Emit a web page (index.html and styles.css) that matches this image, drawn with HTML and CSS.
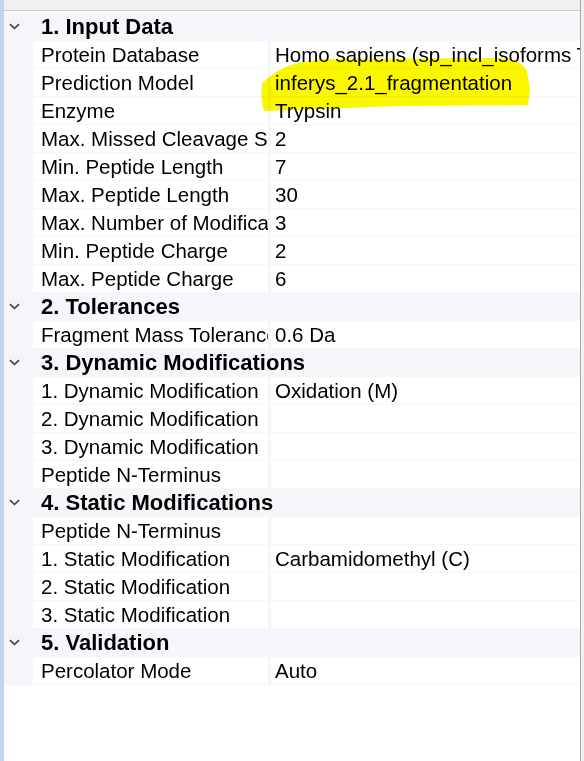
FILE: index.html
```html
<!DOCTYPE html>
<html lang="en">
<head>
    <meta charset="UTF-8">
    <title>Parameters</title>
    <link rel="stylesheet" href="styles.css">
</head>
<body>
    <div class="window">
        <div class="side"></div>
        <div class="panel">
            <div class="topbar"></div>
            <div class="grid">
                <div class="group"><span class="chev"><svg width="11" height="7" viewBox="0 0 11 7"><path d="M1 1.2 L5.5 5.5 L10 1.2" fill="none" stroke="#3c3c3c" stroke-width="1.6"/></svg></span><span class="title">1. Input Data</span></div>
                <div class="row"><span class="indent"></span><span class="name">Protein Database</span><span class="value">Homo sapiens (sp_incl_isoforms TaxID=9606)</span></div>
                <div class="row"><span class="indent"></span><span class="name">Prediction Model</span><span class="value">inferys_2.1_fragmentation</span></div>
                <div class="row"><span class="indent"></span><span class="name">Enzyme</span><span class="value">Trypsin</span></div>
                <div class="row"><span class="indent"></span><span class="name">Max. Missed Cleavage Sites</span><span class="value">2</span></div>
                <div class="row"><span class="indent"></span><span class="name">Min. Peptide Length</span><span class="value">7</span></div>
                <div class="row"><span class="indent"></span><span class="name">Max. Peptide Length</span><span class="value">30</span></div>
                <div class="row"><span class="indent"></span><span class="name">Max. Number of Modifications Per Peptide</span><span class="value">3</span></div>
                <div class="row"><span class="indent"></span><span class="name">Min. Peptide Charge</span><span class="value">2</span></div>
                <div class="row"><span class="indent"></span><span class="name">Max. Peptide Charge</span><span class="value">6</span></div>

                <div class="group"><span class="chev"><svg width="11" height="7" viewBox="0 0 11 7"><path d="M1 1.2 L5.5 5.5 L10 1.2" fill="none" stroke="#3c3c3c" stroke-width="1.6"/></svg></span><span class="title">2. Tolerances</span></div>
                <div class="row"><span class="indent"></span><span class="name">Fragment Mass Tolerance</span><span class="value">0.6 Da</span></div>

                <div class="group"><span class="chev"><svg width="11" height="7" viewBox="0 0 11 7"><path d="M1 1.2 L5.5 5.5 L10 1.2" fill="none" stroke="#3c3c3c" stroke-width="1.6"/></svg></span><span class="title">3. Dynamic Modifications</span></div>
                <div class="row"><span class="indent"></span><span class="name">1. Dynamic Modification</span><span class="value">Oxidation (M)</span></div>
                <div class="row"><span class="indent"></span><span class="name">2. Dynamic Modification</span><span class="value"></span></div>
                <div class="row"><span class="indent"></span><span class="name">3. Dynamic Modification</span><span class="value"></span></div>
                <div class="row"><span class="indent"></span><span class="name">Peptide N-Terminus</span><span class="value"></span></div>

                <div class="group"><span class="chev"><svg width="11" height="7" viewBox="0 0 11 7"><path d="M1 1.2 L5.5 5.5 L10 1.2" fill="none" stroke="#3c3c3c" stroke-width="1.6"/></svg></span><span class="title">4. Static Modifications</span></div>
                <div class="row"><span class="indent"></span><span class="name">Peptide N-Terminus</span><span class="value"></span></div>
                <div class="row"><span class="indent"></span><span class="name">1. Static Modification</span><span class="value">Carbamidomethyl (C)</span></div>
                <div class="row"><span class="indent"></span><span class="name">2. Static Modification</span><span class="value"></span></div>
                <div class="row"><span class="indent"></span><span class="name">3. Static Modification</span><span class="value"></span></div>

                <div class="group"><span class="chev"><svg width="11" height="7" viewBox="0 0 11 7"><path d="M1 1.2 L5.5 5.5 L10 1.2" fill="none" stroke="#3c3c3c" stroke-width="1.6"/></svg></span><span class="title">5. Validation</span></div>
                <div class="row"><span class="indent"></span><span class="name">Percolator Mode</span><span class="value">Auto</span></div>
            </div>
        </div>
        <div class="edge"></div>

        <!-- highlighter stroke over the prediction model -->
        <svg class="marker" width="584" height="761" viewBox="0 0 584 761">
            <path d="M262 84 C268 76 282 67 298 63 L322 59 L500 58 C514 59 523 63 527 71 L530 90 L528 105 L400 106 L264 111 C261 100 261 92 262 84 Z" fill="#fbf700"/>
        </svg>
    </div>
</body>
</html>
```

FILE: styles.css
```css
body {
    margin: 0;
    font-family: "Liberation Sans", Arial, sans-serif;
    background-color: #fff;
}
.window {
    position: relative;
    display: flex;
    width: 584px;
    height: 761px;
    overflow: hidden;
}
.side {
    width: 4px;
    flex-shrink: 0;
    background-color: #c5d5ee;
}
.panel {
    flex: 1;
    min-width: 0;
    background-color: #fff;
    border-right: 1px solid #a8a8a8;
}
.edge {
    width: 3px;
    flex-shrink: 0;
    background-color: #f0f0f0;
}
.topbar {
    height: 10px;
    background-color: #f0f0f0;
    border-bottom: 1px solid #cdcdcd;
}
.grid {
    margin-top: 2px;
    background-color: #f4f6fa;
    display: flex;
    flex-direction: column;
    gap: 1px;
    padding-bottom: 1px;
}
.group {
    height: 27px;
    display: flex;
    align-items: center;
    background-color: #f4f6fa;
    overflow: hidden;
}
.chev {
    width: 29px;
    flex-shrink: 0;
    display: flex;
    padding-left: 5px;
    box-sizing: border-box;
}
.title {
    padding-left: 8px;
    font-size: 22px;
    font-weight: bold;
    color: #000;
    white-space: nowrap;
}
.row {
    height: 27px;
    display: flex;
    font-size: 20.5px;
    line-height: 27px;
    color: #000;
}
.indent {
    width: 29px;
    flex-shrink: 0;
}
.name {
    width: 235px;
    flex-shrink: 0;
    background-color: #fff;
    padding-left: 8px;
    box-sizing: border-box;
    white-space: nowrap;
    overflow: hidden;
}
.value {
    flex: 1;
    min-width: 0;
    margin-left: 3px;
    background-color: #fff;
    padding-left: 4px;
    white-space: nowrap;
    overflow: hidden;
}
.marker {
    position: absolute;
    left: 0;
    top: 0;
    pointer-events: none;
    mix-blend-mode: multiply;
}
```
